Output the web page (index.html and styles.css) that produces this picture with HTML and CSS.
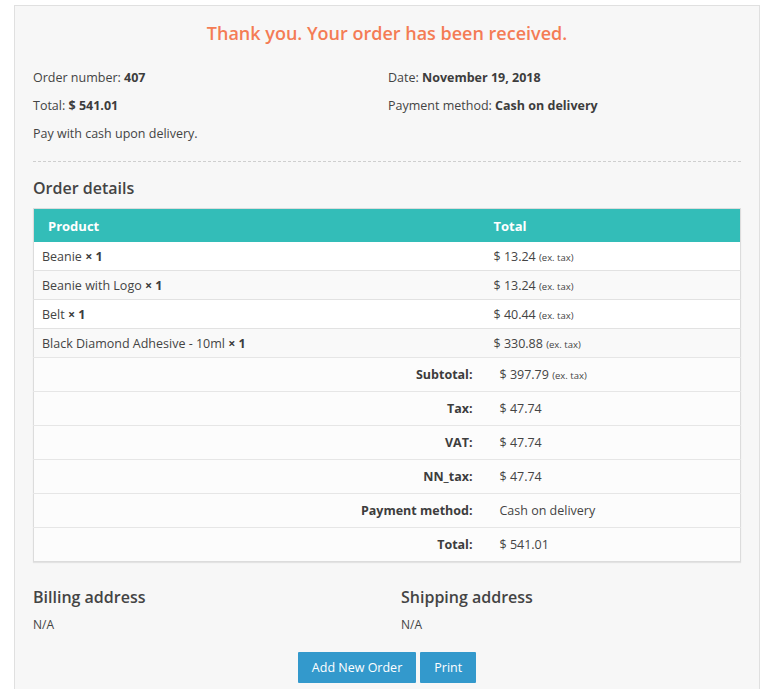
FILE: index.html
```html
<!DOCTYPE html>
<html>
<head>
<meta charset="utf-8">
<link rel="stylesheet" href="styles.css">
</head>
<body>
<div class="panel">
  <h2 class="thanks">Thank you. Your order has been received.</h2>
  <div class="info">
    <div class="info-col">
      <p>Order number: <strong>407</strong></p>
      <p>Total: <strong>$ 541.01</strong></p>
      <p>Pay with cash upon delivery.</p>
    </div>
    <div class="info-col">
      <p>Date: <strong>November 19, 2018</strong></p>
      <p>Payment method: <strong>Cash on delivery</strong></p>
    </div>
  </div>
  <hr class="dash">
  <h3 class="section">Order details</h3>
  <table class="details">
    <colgroup><col class="c1"><col class="c2"></colgroup>
    <thead>
      <tr><th class="h-prod">Product</th><th class="h-total">Total</th></tr>
    </thead>
    <tbody>
      <tr><td>Beanie <strong>× 1</strong></td><td>$ 13.24 <small>(ex. tax)</small></td></tr>
      <tr><td>Beanie with Logo <strong>× 1</strong></td><td>$ 13.24 <small>(ex. tax)</small></td></tr>
      <tr><td>Belt <strong>× 1</strong></td><td>$ 40.44 <small>(ex. tax)</small></td></tr>
      <tr><td>Black Diamond Adhesive - 10ml <strong>× 1</strong></td><td>$ 330.88 <small>(ex. tax)</small></td></tr>
    </tbody>
    <tfoot>
      <tr><th>Subtotal:</th><td>$ 397.79 <small>(ex. tax)</small></td></tr>
      <tr><th>Tax:</th><td>$ 47.74</td></tr>
      <tr><th>VAT:</th><td>$ 47.74</td></tr>
      <tr><th>NN_tax:</th><td>$ 47.74</td></tr>
      <tr><th>Payment method:</th><td>Cash on delivery</td></tr>
      <tr><th>Total:</th><td>$ 541.01</td></tr>
    </tfoot>
  </table>
  <div class="addresses">
    <div class="addr">
      <h3 class="section">Billing address</h3>
      <p>N/A</p>
    </div>
    <div class="addr">
      <h3 class="section">Shipping address</h3>
      <p>N/A</p>
    </div>
  </div>
  <div class="actions">
    <button class="btn">Add New Order</button>
    <button class="btn">Print</button>
  </div>
</div>
</body>
</html>
```

FILE: styles.css
```css
html, body {
  margin: 0;
  padding: 0;
  background: #fff;
}
body {
  padding: 5px 0 0 14px;
  font-family: "Open Sans", "Liberation Sans", sans-serif;
  color: #444;
  font-size: 13px;
}
.panel {
  width: 708px;
  border: 1px solid #e0e0e0;
  border-bottom: none;
  background: #f7f7f7;
  padding: 15px 18px 6px 18px;
}
.thanks {
  margin: 0;
  text-align: center;
  color: #f47c55;
  font-size: 18px;
  font-weight: 600;
  line-height: 24px;
}
.info {
  display: grid;
  grid-template-columns: 355px 1fr;
  margin-top: 23px;
  font-size: 12.5px;
}
.info p {
  margin: 0 0 8px 0;
  line-height: 20px;
}
.info strong { font-weight: 700; color: #3d3d3d; }
.dash {
  border: none;
  border-top: 1px dashed #cfcfcf;
  margin: 9px 0 0 0;
  height: 0;
}
.section {
  margin: 15px 0 0 0;
  font-size: 16px;
  font-weight: 600;
  line-height: 22px;
  color: #444;
}
.details {
  margin-top: 9px;
  width: 708px;
  table-layout: fixed;
  border-collapse: collapse;
  border: 1px solid #dcdcdc;
  box-shadow: 0 1px 1px rgba(0,0,0,0.08);
  font-size: 12.5px;
}
.details col.c1 { width: 452px; }
.details thead th {
  background: #33bdb8;
  color: #fff;
  font-weight: 700;
  font-size: 13px;
  text-align: left;
  height: 33px;
  padding: 0;
}
.details .h-prod { padding-left: 14px; }
.details .h-total { padding-left: 8px; }
.details tbody td {
  height: 28px;
  padding: 0 0 0 8px;
  border-top: 1px solid #e2e2e2;
  background: #fff;
}
.details tbody tr:nth-child(even) td { background: #f9f9f9; }
.details tbody tr:first-child td { border-top: none; }
.details strong { font-weight: 700; color: #3d3d3d; }
.details small { font-size: 9.5px; }
.details tfoot th,
.details tfoot td {
  height: 33px;
  border-top: 1px solid #e6e6e6;
  background: #fcfcfc;
  font-size: 12.5px;
}
.details tfoot th {
  text-align: right;
  padding: 0 13px 0 0;
  font-weight: 700;
  color: #3d3d3d;
}
.details tfoot td { padding: 0 0 0 14px; }
.addresses {
  display: grid;
  grid-template-columns: 368px 1fr;
  margin-top: 24px;
}
.addresses .section { margin-top: 0; }
.addr p {
  margin: 8px 0 0 0;
  font-size: 12px;
  line-height: 18px;
}
.actions {
  display: flex;
  justify-content: center;
  gap: 4px;
  margin-top: 18px;
}
.btn {
  border: none;
  background: #3399cc;
  color: #fff;
  font-family: "Open Sans", "Liberation Sans", sans-serif;
  font-size: 12.5px;
  height: 31px;
  padding: 0 14px;
  border-radius: 1px;
}
```
